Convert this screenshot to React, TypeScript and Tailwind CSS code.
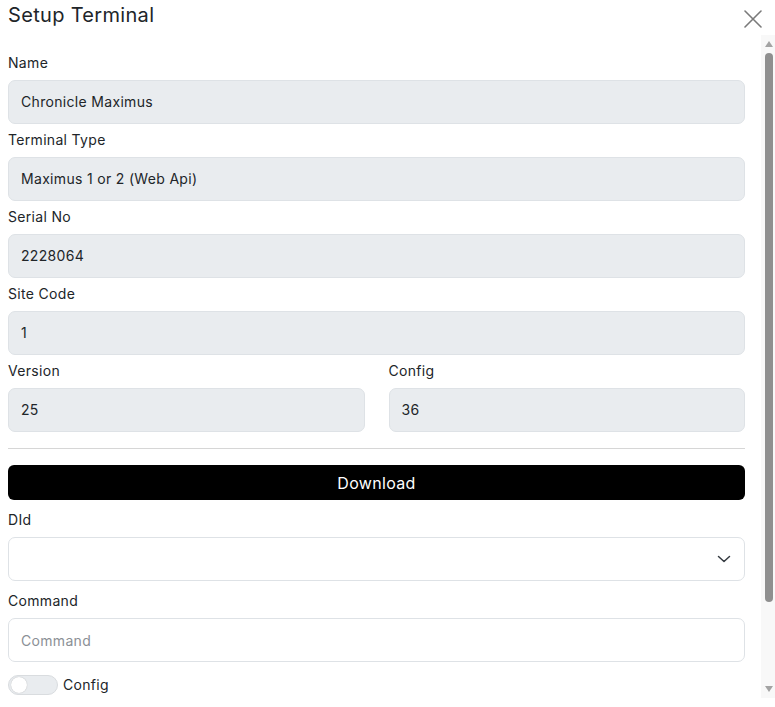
interface FieldProps {
  label: string;
  value: string;
}

// read-only text box used for the terminal details
function ReadField({ label, value }: FieldProps) {
  return (
    <div>
      <label className="block pt-[5px] pb-[7px] text-sm leading-[21px] text-[#212529]">{label}</label>
      <div className="flex h-[44px] items-center rounded-[7px] border border-[#dee2e6] bg-[#e9ecef] px-3 text-sm text-[#212529]">
        {value}
      </div>
    </div>
  );
}

// thin classic scrollbar drawn beside the form
function ScrollRail() {
  return (
    <div className="flex w-[14px] shrink-0 flex-col items-center bg-[#f8f8f8]">
      <svg width="10" height="8" viewBox="0 0 10 8" className="mt-[5px] ml-[2px]">
        <path d="M1 7L5 1L9 7Z" fill="#a3a3a3" />
      </svg>
      <div className="mt-[5px] ml-[2px] h-[549px] w-[8px] rounded-full bg-[#8f8f8f]" />
      <div className="flex-1" />
      <svg width="10" height="8" viewBox="0 0 10 8" className="mb-[5px] ml-[2px]">
        <path d="M1 1L5 7L9 1Z" fill="#a3a3a3" />
      </svg>
    </div>
  );
}

export default function App() {
  return (
    <div
      className="flex h-[707px] w-[775px] flex-col bg-white tracking-[0.02em]"
      style={{ fontFamily: 'Inter, "Noto Sans", sans-serif' }}
    >
      {/* Header */}
      <div className="flex h-[35px] shrink-0 items-start justify-between pl-2 pr-[13px]">
        <h1 className="pt-[2px] text-[20px] leading-[26px] font-normal text-[#212529]">Setup Terminal</h1>
        <button className="mt-[10px]">
          <svg width="18" height="18" viewBox="0 0 18 18" stroke="#7a7a7a" strokeWidth="1.6" strokeLinecap="round">
            <path d="M1 1L17 17M17 1L1 17" />
          </svg>
        </button>
      </div>

      {/* Body */}
      <div className="flex h-[663px] shrink-0">
        <div className="flex-1 overflow-hidden pl-2 pr-4 pt-[12px]">
          <ReadField label="Name" value="Chronicle Maximus" />
          <ReadField label="Terminal Type" value="Maximus 1 or 2 (Web Api)" />
          <ReadField label="Serial No" value="2228064" />
          <ReadField label="Site Code" value="1" />
          <div className="grid grid-cols-2 gap-6">
            <ReadField label="Version" value="25" />
            <ReadField label="Config" value="36" />
          </div>

          <hr className="mt-[16px] mb-[16px] border-t border-[#d6d6d6]" />

          <button className="flex h-[35px] w-full items-center justify-center rounded-[6px] bg-black text-base text-white">
            Download
          </button>

          <div className="mt-1">
            <label className="block pt-[5px] pb-[7px] text-sm leading-[21px] text-[#212529]">DId</label>
            <div className="flex h-[44px] items-center justify-between rounded-[7px] border border-[#dee2e6] bg-white px-3">
              <span />
              <svg width="16" height="16" viewBox="0 0 16 16" fill="none" stroke="#343a40" strokeWidth="1.5" strokeLinecap="round" strokeLinejoin="round">
                <path d="M2.5 5.5l5.5 5 5.5-5" />
              </svg>
            </div>
          </div>

          <div className="mt-1">
            <label className="block pt-[5px] pb-[7px] text-sm leading-[21px] text-[#212529]">Command</label>
            <input
              placeholder="Command"
              className="h-[44px] w-full rounded-[7px] border border-[#dee2e6] bg-white px-3 text-sm text-[#212529] outline-none placeholder:text-[#8b9096]"
            />
          </div>

          <div className="mt-[13px] flex items-center gap-[5px]">
            <span className="flex h-[20px] w-[50px] items-center rounded-full border border-[#d9dcdf] bg-[#e9ecef] px-[2px]">
              <span className="h-[16px] w-[16px] rounded-full bg-white shadow-[0_0_1px_rgba(0,0,0,0.3)]" />
            </span>
            <span className="text-sm text-[#212529]">Config</span>
          </div>
        </div>
        <ScrollRail />
      </div>
    </div>
  );
}
